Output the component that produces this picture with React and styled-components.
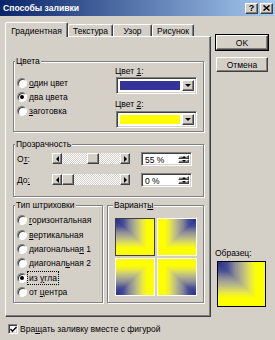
import React from "react";
import styled, { createGlobalStyle, css } from "styled-components";

const Global = createGlobalStyle`
  html, body { margin: 0; padding: 0; background: #D4D0C8; }
  * { box-sizing: border-box; }
`;

const FONT = `"Liberation Sans", Arial, sans-serif`;

const raised = css`
  background: #D4D0C8;
  border: 1px solid;
  border-color: #fff #404040 #404040 #fff;
  box-shadow: inset -1px -1px 0 #808080;
`;
const sunken = css`
  border: 1px solid;
  border-color: #808080 #fff #fff #808080;
  box-shadow: inset 1px 1px 0 #404040, inset -1px -1px 0 #D4D0C8;
`;

const Window = styled.div`
  width: 275px;
  height: 340px;
  overflow: hidden;
  background: #D4D0C8;
  font-family: ${FONT};
  font-size: 8.5px;
  color: #000;
  display: flex;
  flex-direction: column;
`;

const TitleBar = styled.div`
  height: 16px;
  flex: none;
  display: flex;
  align-items: center;
  justify-content: space-between;
  padding: 0 2px 0 3px;
  background: linear-gradient(to right, #0A246A, #A6CAF0);
`;
const Title = styled.span`
  color: #fff;
  font-weight: bold;
  font-size: 8.6px;
`;
const CapButtons = styled.div`
  display: flex;
  gap: 2px;
`;
const CapButton = styled.div`
  ${raised};
  width: 13px;
  height: 11px;
  display: flex;
  align-items: center;
  justify-content: center;
  font-weight: bold;
  font-size: 9px;
  line-height: 1;
`;

const Body = styled.div`
  display: flex;
  padding: 6px 0 0 5px;
`;
const TabArea = styled.div`
  width: 206px;
  display: flex;
  flex-direction: column;
`;
const TabStrip = styled.div`
  height: 14px;
  display: flex;
  align-items: flex-end;
`;
const Tab = styled.div`
  width: ${(p) => p.$w}px;
  height: ${(p) => (p.$active ? 15 : 12)}px;
  margin-bottom: ${(p) => (p.$active ? -1 : 0)}px;
  position: relative;
  z-index: ${(p) => (p.$active ? 2 : 0)};
  background: #D4D0C8;
  border: 1px solid;
  border-bottom: none;
  border-color: #fff #404040 transparent #fff;
  border-radius: 2px 2px 0 0;
  box-shadow: inset -1px 0 0 #808080;
  display: flex;
  align-items: ${(p) => (p.$active ? "flex-start" : "center")};
  justify-content: center;
  padding-top: ${(p) => (p.$active ? 3 : 0)}px;
  white-space: nowrap;
`;
const TabPanel = styled.div`
  height: 281px;
  border: 1px solid;
  border-color: #fff #404040 #404040 #fff;
  box-shadow: inset -1px -1px 0 #808080;
  padding: 19px 6px 0 7px;
  display: flex;
  flex-direction: column;
`;

const Group = styled.fieldset`
  margin: ${(p) => p.$mt || 0}px 0 0 0;
  padding: ${(p) => p.$pad};
  min-width: 0;
  border: 1px solid #808080;
  box-shadow: 1px 1px 0 #fff, inset 1px 1px 0 #fff;
  ${(p) => p.$w && `width: ${p.$w}px;`}
`;
const Legend = styled.legend`
  padding: 0 1px;
  margin-left: -2px;
  line-height: 10px;
  background: #D4D0C8;
`;

const ColorsBody = styled.div`
  display: flex;
  justify-content: space-between;
`;
const RadioList = styled.div`
  display: flex;
  flex-direction: column;
  padding-top: ${(p) => p.$pt}px;
`;
const RadioRow = styled.div`
  height: ${(p) => p.$h}px;
  display: flex;
  align-items: center;
  gap: 2px;
  white-space: nowrap;
`;
const RadioDot = styled.span`
  width: 10px;
  height: 10px;
  flex: none;
  border-radius: 50%;
  border: 1px solid;
  border-color: #808080 #fff #fff #808080;
  box-shadow: inset 1px 1px 0 #404040;
  background: #fff;
  display: flex;
  align-items: center;
  justify-content: center;
  &::after {
    content: "";
    width: 4px;
    height: 4px;
    border-radius: 50%;
    background: ${(p) => (p.$on ? "#000" : "transparent")};
  }
`;
const Label = styled.span`
  line-height: 10px;
  ${(p) =>
    p.$focus &&
    css`
      outline: 1px dotted #000;
      outline-offset: 1px;
    `}
`;
const U = styled.span`
  text-decoration: underline;
`;

const ColorPickers = styled.div`
  width: 82px;
  display: flex;
  flex-direction: column;
`;
const FieldLabel = styled.div`
  line-height: 10px;
  margin-top: ${(p) => p.$mt || 0}px;
`;
const Combo = styled.div`
  ${sunken};
  background: #fff;
  margin-top: ${(p) => p.$mt}px;
  margin-left: 1px;
  width: 81px;
  height: 17px;
  display: flex;
  padding: 2px;
  gap: 1px;
`;
const Swatch = styled.div`
  flex: 1;
  background: ${(p) => p.$color};
  border: 1px solid #fff;
`;
const DropButton = styled.div`
  ${raised};
  width: 12px;
  display: flex;
  align-items: center;
  justify-content: center;
`;

const TransRows = styled.div`
  display: flex;
  flex-direction: column;
  gap: 8px;
  padding: 3px 0 0;
`;
const TransRow = styled.div`
  height: 13px;
  display: flex;
  align-items: center;
`;
const RowLabel = styled.span`
  width: 35px;
  line-height: 10px;
`;
const Slider = styled.div`
  width: 78px;
  height: 11px;
  display: flex;
`;
const ArrowBtn = styled.div`
  ${raised};
  width: 10px;
  flex: none;
  display: flex;
  align-items: center;
  justify-content: center;
`;
const Track = styled.div`
  flex: 1;
  display: flex;
  background: repeating-conic-gradient(#fff 0 25%, #D4D0C8 0 50%) 0 0 / 2px 2px;
`;
const Thumb = styled.div`
  ${raised};
  width: 12px;
  flex: none;
`;
const Spin = styled.div`
  ${sunken};
  background: #fff;
  width: 51px;
  height: 14px;
  margin-left: 11px;
  display: flex;
  align-items: stretch;
  padding: 2px 2px 2px 2px;
`;
const SpinText = styled.span`
  flex: 1;
  line-height: 10px;
  padding-left: 1px;
`;
const SpinButtons = styled.div`
  width: 11px;
  display: flex;
  flex-direction: column;
`;
const SpinBtn = styled.div`
  ${raised};
  flex: 1;
  display: flex;
  align-items: center;
  justify-content: center;
`;

const BottomRow = styled.div`
  display: flex;
  gap: 4px;
  margin-top: 3px;
`;
const Tiles = styled.div`
  display: grid;
  grid-template-columns: 40px 40px;
  grid-template-rows: 38px 38px;
  gap: 2px;
`;
const Tile = styled.div`
  border: 1px solid ${(p) => (p.$sel ? "#404040" : "#fff")};
  line-height: 0;
  overflow: hidden;
`;

const Side = styled.div`
  width: 52px;
  margin-left: 5px;
  display: flex;
  flex-direction: column;
`;
const Button = styled.div`
  ${raised};
  height: 15px;
  margin-top: ${(p) => p.$mt}px;
  display: flex;
  align-items: center;
  justify-content: center;
  ${(p) =>
    p.$default &&
    css`
      outline: 1px solid #000;
      outline-offset: 0;
    `}
`;
const Preview = styled.div`
  margin-top: auto;
  margin-bottom: 10px;
  display: flex;
  flex-direction: column;
`;
const PreviewLabel = styled.div`
  line-height: 10px;
  margin-left: -1px;
`;
const Sample = styled.div`
  width: 49px;
  height: 46px;
  margin: 3px 0 0 1px;
  border: 1px solid #000;
  line-height: 0;
  overflow: hidden;
`;

const CheckRow = styled.div`
  margin-top: 5px;
  height: 14px;
  padding-left: 8px;
  display: flex;
  align-items: center;
  gap: 2px;
`;
const CheckBox = styled.span`
  ${sunken};
  width: 10px;
  height: 10px;
  background: #fff;
  display: flex;
  align-items: center;
  justify-content: center;
`;

const Tri = ({ dir, size = 3 }) => {
  const s = size;
  const pts = {
    left: `${s},0 ${s},${2 * s} 0,${s}`,
    right: `0,0 0,${2 * s} ${s},${s}`,
    down: `0,0 ${2 * s},0 ${s},${s}`,
    up: `0,${s} ${2 * s},${s} ${s},0`,
  }[dir];
  const horiz = dir === "left" || dir === "right";
  return (
    <svg width={horiz ? s : 2 * s} height={horiz ? 2 * s : s} style={{ display: "block" }}>
      <polygon points={pts} fill="#000" />
    </svg>
  );
};

const STOPS = [
  [0, [40, 46, 140]],
  [0.2, [72, 78, 150]],
  [0.36, [140, 140, 150]],
  [0.52, [182, 182, 140]],
  [0.68, [228, 228, 80]],
  [0.82, [255, 255, 0]],
  [1, [255, 255, 0]],
];
function colorAt(t) {
  for (let i = 1; i < STOPS.length; i++) {
    if (t <= STOPS[i][0]) {
      const [t0, c0] = STOPS[i - 1];
      const [t1, c1] = STOPS[i];
      const k = (t - t0) / (t1 - t0);
      const c = c0.map((v, j) => Math.round(v + (c1[j] - v) * k));
      return `rgb(${c.join(",")})`;
    }
  }
  return "rgb(255,255,0)";
}

const CornerGradient = ({ w, h, corner }) => {
  const N = 28;
  const rects = [];
  for (let i = N; i >= 1; i--) {
    const s = i / N;
    const rw = w * s;
    const rh = h * s;
    const x = corner.includes("r") ? w - rw : 0;
    const y = corner.includes("b") ? h - rh : 0;
    rects.push(<rect key={i} x={x} y={y} width={rw} height={rh} fill={colorAt((i - 0.5) / N)} />);
  }
  return (
    <svg width={w} height={h} style={{ display: "block" }}>
      {rects}
    </svg>
  );
};

const TransSlider = ({ value }) => {
  const range = 78 - 20 - 12;
  return (
    <Slider>
      <ArrowBtn>
        <Tri dir="left" size={3} />
      </ArrowBtn>
      <Track>
        <div style={{ width: Math.round((range * value) / 100) }} />
        <Thumb />
      </Track>
      <ArrowBtn>
        <Tri dir="right" size={3} />
      </ArrowBtn>
    </Slider>
  );
};

const SpinEdit = ({ text }) => (
  <Spin>
    <SpinText>{text}</SpinText>
    <SpinButtons>
      <SpinBtn>
        <Tri dir="up" size={2} />
      </SpinBtn>
      <SpinBtn>
        <Tri dir="down" size={2} />
      </SpinBtn>
    </SpinButtons>
  </Spin>
);

const Radio = ({ on, h, children, focus }) => (
  <RadioRow $h={h}>
    <RadioDot $on={on} />
    <Label $focus={focus}>{children}</Label>
  </RadioRow>
);

export default function App() {
  return (
    <Window>
      <Global />
      <TitleBar>
        <Title>Способы заливки</Title>
        <CapButtons>
          <CapButton>?</CapButton>
          <CapButton>
            <svg width="7" height="6" style={{ display: "block" }}>
              <path d="M0.5 0.5 L6.5 5.5 M6.5 0.5 L0.5 5.5" stroke="#000" strokeWidth="1.5" />
            </svg>
          </CapButton>
        </CapButtons>
      </TitleBar>
      <Body>
        <TabArea>
          <TabStrip>
            <Tab $active $w={63}>Градиентная</Tab>
            <Tab $w={45}>Текстура</Tab>
            <Tab $w={39}>Узор</Tab>
            <Tab $w={42}>Рисунок</Tab>
          </TabStrip>
          <TabPanel>
            <Group $pad="0 6px 3px 3px">
              <Legend>Цвета</Legend>
              <ColorsBody>
                <RadioList $pt={10}>
                  <Radio h={14}>
                    <U>о</U>дин цвет
                  </Radio>
                  <Radio h={14} on>
                    <U>д</U>ва цвета
                  </Radio>
                  <Radio h={14}>
                    <U>з</U>аготовка
                  </Radio>
                </RadioList>
                <ColorPickers>
                  <FieldLabel>
                    Цвет <U>1</U>:
                  </FieldLabel>
                  <Combo $mt={1}>
                    <Swatch $color="#333399" />
                    <DropButton>
                      <Tri dir="down" size={3} />
                    </DropButton>
                  </Combo>
                  <FieldLabel $mt={5}>
                    Цвет <U>2</U>:
                  </FieldLabel>
                  <Combo $mt={2}>
                    <Swatch $color="#FFFF00" />
                    <DropButton>
                      <Tri dir="down" size={3} />
                    </DropButton>
                  </Combo>
                </ColorPickers>
              </ColorsBody>
            </Group>
            <Group $mt={7} $pad="0 6px 10px 3px">
              <Legend>Прозрачность</Legend>
              <TransRows>
                <TransRow>
                  <RowLabel>
                    О<U>т</U>:
                  </RowLabel>
                  <TransSlider value={55} />
                  <SpinEdit text="55 %" />
                </TransRow>
                <TransRow>
                  <RowLabel>
                    До<U>:</U>
                  </RowLabel>
                  <TransSlider value={0} />
                  <SpinEdit text="0 %" />
                </TransRow>
              </TransRows>
            </Group>
            <BottomRow>
              <Group $w={90} $pad="0 2px 3px 3px">
                <Legend>Тип штриховки</Legend>
                <RadioList $pt={3}>
                  <Radio h={14.4}>
                    <U>г</U>оризонтальная
                  </Radio>
                  <Radio h={14.4}>
                    <U>в</U>ертикальная
                  </Radio>
                  <Radio h={14.4}>
                    диагональна<U>я</U> 1
                  </Radio>
                  <Radio h={14.4}>
                    диагонал<U>ь</U>ная 2
                  </Radio>
                  <Radio h={14.4} on focus>
                    из <U>у</U>гла
                  </Radio>
                  <Radio h={14.4}>
                    от <U>ц</U>ентра
                  </Radio>
                </RadioList>
              </Group>
              <Group $w={97} $pad="8px 2px 3px 7px">
                <Legend>
                  Вариант<U>ы</U>
                </Legend>
                <Tiles>
                  <Tile $sel>
                    <CornerGradient w={38} h={36} corner="tl" />
                  </Tile>
                  <Tile>
                    <CornerGradient w={38} h={36} corner="tr" />
                  </Tile>
                  <Tile>
                    <CornerGradient w={38} h={36} corner="bl" />
                  </Tile>
                  <Tile>
                    <CornerGradient w={38} h={36} corner="br" />
                  </Tile>
                </Tiles>
              </Group>
            </BottomRow>
          </TabPanel>
        </TabArea>
        <Side>
          <Button $mt={13} $default>
            OK
          </Button>
          <Button $mt={7}>Отмена</Button>
          <Preview>
            <PreviewLabel>Образец:</PreviewLabel>
            <Sample>
              <CornerGradient w={47} h={44} corner="tl" />
            </Sample>
          </Preview>
        </Side>
      </Body>
      <CheckRow>
        <CheckBox>
          <svg width="7" height="7" style={{ display: "block" }}>
            <path d="M0.5 3 L2.5 5.2 L6.5 1" stroke="#000" strokeWidth="1.5" fill="none" />
          </svg>
        </CheckBox>
        <Label>
          Вра<U>щ</U>ать заливку вместе с фигурой
        </Label>
      </CheckRow>
    </Window>
  );
}
